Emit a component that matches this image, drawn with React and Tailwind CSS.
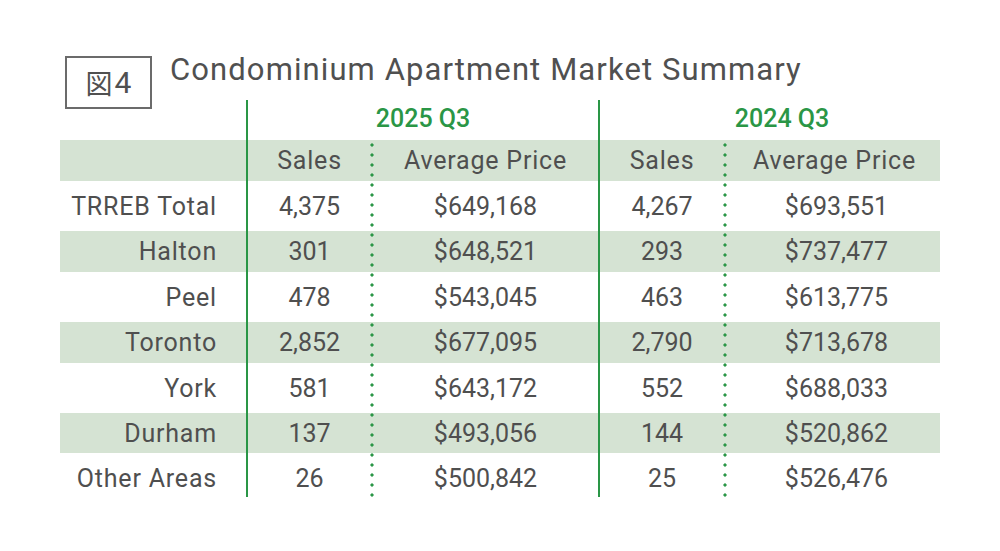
import React from "react";

const rows = [
  ["TRREB Total", "4,375", "$649,168", "4,267", "$693,551", false, "h-[50px]"],
  ["Halton", "301", "$648,521", "293", "$737,477", true, "h-[41px]"],
  ["Peel", "478", "$543,045", "463", "$613,775", false, "h-[50px]"],
  ["Toronto", "2,852", "$677,095", "2,790", "$713,678", true, "h-[41px]"],
  ["York", "581", "$643,172", "552", "$688,033", false, "h-[50px]"],
  ["Durham", "137", "$493,056", "144", "$520,862", true, "h-[40px]"],
  ["Other Areas", "26", "$500,842", "25", "$526,476", false, "h-[50px]"],
];

const cols = "grid grid-cols-[187px_125px_227px_126px_215px]";

function Dotted({ left }) {
  return (
    <div
      className={`absolute top-[40px] h-[360px] w-[4px] bg-[radial-gradient(circle,#2a9646_1.3px,transparent_1.9px)] bg-[length:4px_10px] ${left}`}
    />
  );
}

export default function App() {
  return (
    <div
      className="w-[1000px] h-[551px] bg-white text-[#4f4f4f] overflow-hidden"
      style={{ fontFamily: "Roboto, 'Noto Sans CJK JP', sans-serif" }}
    >
      <div className="h-[100px] flex items-start pl-[65px] pt-[56px]">
        <div className="w-[87px] h-[53px] shrink-0 border-2 border-[#6b6b6b] flex items-center justify-center leading-none text-[#505050]">
          <span style={{ fontFamily: "'Noto Sans CJK JP', sans-serif" }} className="text-[27px]">図</span>
          <span className="ml-[2px] text-[30px]">4</span>
        </div>
        <div className="ml-[18px] -mt-[4px] text-[31px] leading-[36px] tracking-[1.1px] text-[#505050]">
          Condominium Apartment Market Summary
        </div>
      </div>

      <div className="relative ml-[60px] w-[880px] text-[25px] leading-none">
        <div className={`${cols} h-[40px] items-center text-[#2a9646] font-medium`}>
          <div />
          <div className="col-span-2 text-center pb-[4px]">2025 Q3</div>
          <div className="col-span-2 text-center pb-[4px] pl-[25px]">2024 Q3</div>
        </div>
        <div className={`${cols} h-[41px] items-center bg-[#d5e3d3] tracking-[0.8px]`}>
          <div />
          <div className="text-center">Sales</div>
          <div className="text-center">Average Price</div>
          <div className="text-center">Sales</div>
          <div className="text-center pl-[4px]">Average Price</div>
        </div>
        {rows.map(([label, s1, p1, s2, p2, band, h]) => (
          <div
            key={label}
            className={`${cols} ${h} items-center ${band ? "bg-[#d5e3d3]" : "bg-white"}`}
          >
            <div className="text-right pr-[30px] tracking-[0.8px]">{label}</div>
            <div className="text-center">{s1}</div>
            <div className="text-center">{p1}</div>
            <div className="text-center">{s2}</div>
            <div className="text-center pl-[8px]">{p2}</div>
          </div>
        ))}

        <div className="absolute left-[186px] top-0 h-[397px] w-[2px] bg-[#2a9646]" />
        <div className="absolute left-[538px] top-0 h-[397px] w-[2px] bg-[#2a9646]" />
        <Dotted left="left-[310px]" />
        <Dotted left="left-[663px]" />
      </div>
    </div>
  );
}
